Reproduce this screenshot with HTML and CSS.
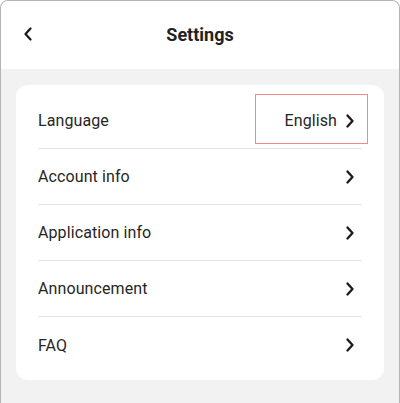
FILE: index.html
```html
<!DOCTYPE html>
<html>
<head>
<meta charset="utf-8">
<link rel="stylesheet" href="styles.css">
</head>
<body>
<div class="frame">
  <header class="topbar">
    <svg class="back" width="10" height="14" viewBox="0 0 10 14"><path d="M7.5 1.5 L2.5 7 L7.5 12.5" fill="none" stroke="#1a1a1a" stroke-width="2.2" stroke-linecap="round" stroke-linejoin="round"/></svg>
    <h1 class="title">Settings</h1>
  </header>
  <main class="content">
    <div class="card">
      <div class="row">
        <span class="label">Language</span>
        <span class="value">English
          <svg class="chev" width="10" height="14" viewBox="0 0 10 14"><path d="M2.5 1.5 L7.5 7 L2.5 12.5" fill="none" stroke="#1a1a1a" stroke-width="2.3" stroke-linecap="round" stroke-linejoin="round"/></svg>
        </span>
        <span class="highlight"></span>
      </div>
      <div class="row">
        <span class="label">Account info</span>
        <svg class="chev" width="10" height="14" viewBox="0 0 10 14"><path d="M2.5 1.5 L7.5 7 L2.5 12.5" fill="none" stroke="#1a1a1a" stroke-width="2.3" stroke-linecap="round" stroke-linejoin="round"/></svg>
      </div>
      <div class="row">
        <span class="label">Application info</span>
        <svg class="chev" width="10" height="14" viewBox="0 0 10 14"><path d="M2.5 1.5 L7.5 7 L2.5 12.5" fill="none" stroke="#1a1a1a" stroke-width="2.3" stroke-linecap="round" stroke-linejoin="round"/></svg>
      </div>
      <div class="row">
        <span class="label">Announcement</span>
        <svg class="chev" width="10" height="14" viewBox="0 0 10 14"><path d="M2.5 1.5 L7.5 7 L2.5 12.5" fill="none" stroke="#1a1a1a" stroke-width="2.3" stroke-linecap="round" stroke-linejoin="round"/></svg>
      </div>
      <div class="row">
        <span class="label">FAQ</span>
        <svg class="chev" width="10" height="14" viewBox="0 0 10 14"><path d="M2.5 1.5 L7.5 7 L2.5 12.5" fill="none" stroke="#1a1a1a" stroke-width="2.3" stroke-linecap="round" stroke-linejoin="round"/></svg>
      </div>
    </div>
  </main>
</div>
</body>
</html>
```
FILE: styles.css
```css
* { box-sizing: border-box; }
html, body { margin: 0; padding: 0; background: #ffffff; }
body {
  font-family: Roboto, "Liberation Sans", sans-serif;
  color: #222222;
  width: 400px;
  height: 403px;
  overflow: hidden;
}
.frame {
  width: 400px;
  height: 403px;
  border: 1px solid #b4b4b4;
  border-bottom: none;
  border-radius: 8px 8px 0 0;
  background: #f2f2f2;
  overflow: hidden;
  display: flex;
  flex-direction: column;
}
.topbar {
  height: 68px;
  flex: none;
  background: #ffffff;
  display: flex;
  align-items: center;
  justify-content: center;
  position: relative;
}
.back {
  position: absolute;
  left: 22px;
  top: 26px;
}
.title {
  margin: 0;
  font-size: 18px;
  font-weight: 700;
  color: #222222;
  line-height: 22px;
}
.content {
  padding: 16px 15px 0 15px;
}
.card {
  background: #ffffff;
  border-radius: 12px;
  padding: 8px 22px 7px 22px;
}
.row {
  height: 56px;
  display: flex;
  align-items: center;
  justify-content: space-between;
  border-bottom: 1px solid #e4e4e4;
  font-size: 16px;
  letter-spacing: 0.1px;
  position: relative;
}
.row:last-child { border-bottom: none; }
.label { color: #262626; }
.value {
  display: flex;
  align-items: center;
  gap: 8px;
  color: #262626;
}
.chev { display: block; margin-right: 7px; }
.highlight {
  position: absolute;
  right: -6px;
  top: 1px;
  width: 113px;
  height: 50px;
  border: 1px solid #f08a8a;
  pointer-events: none;
}
```
